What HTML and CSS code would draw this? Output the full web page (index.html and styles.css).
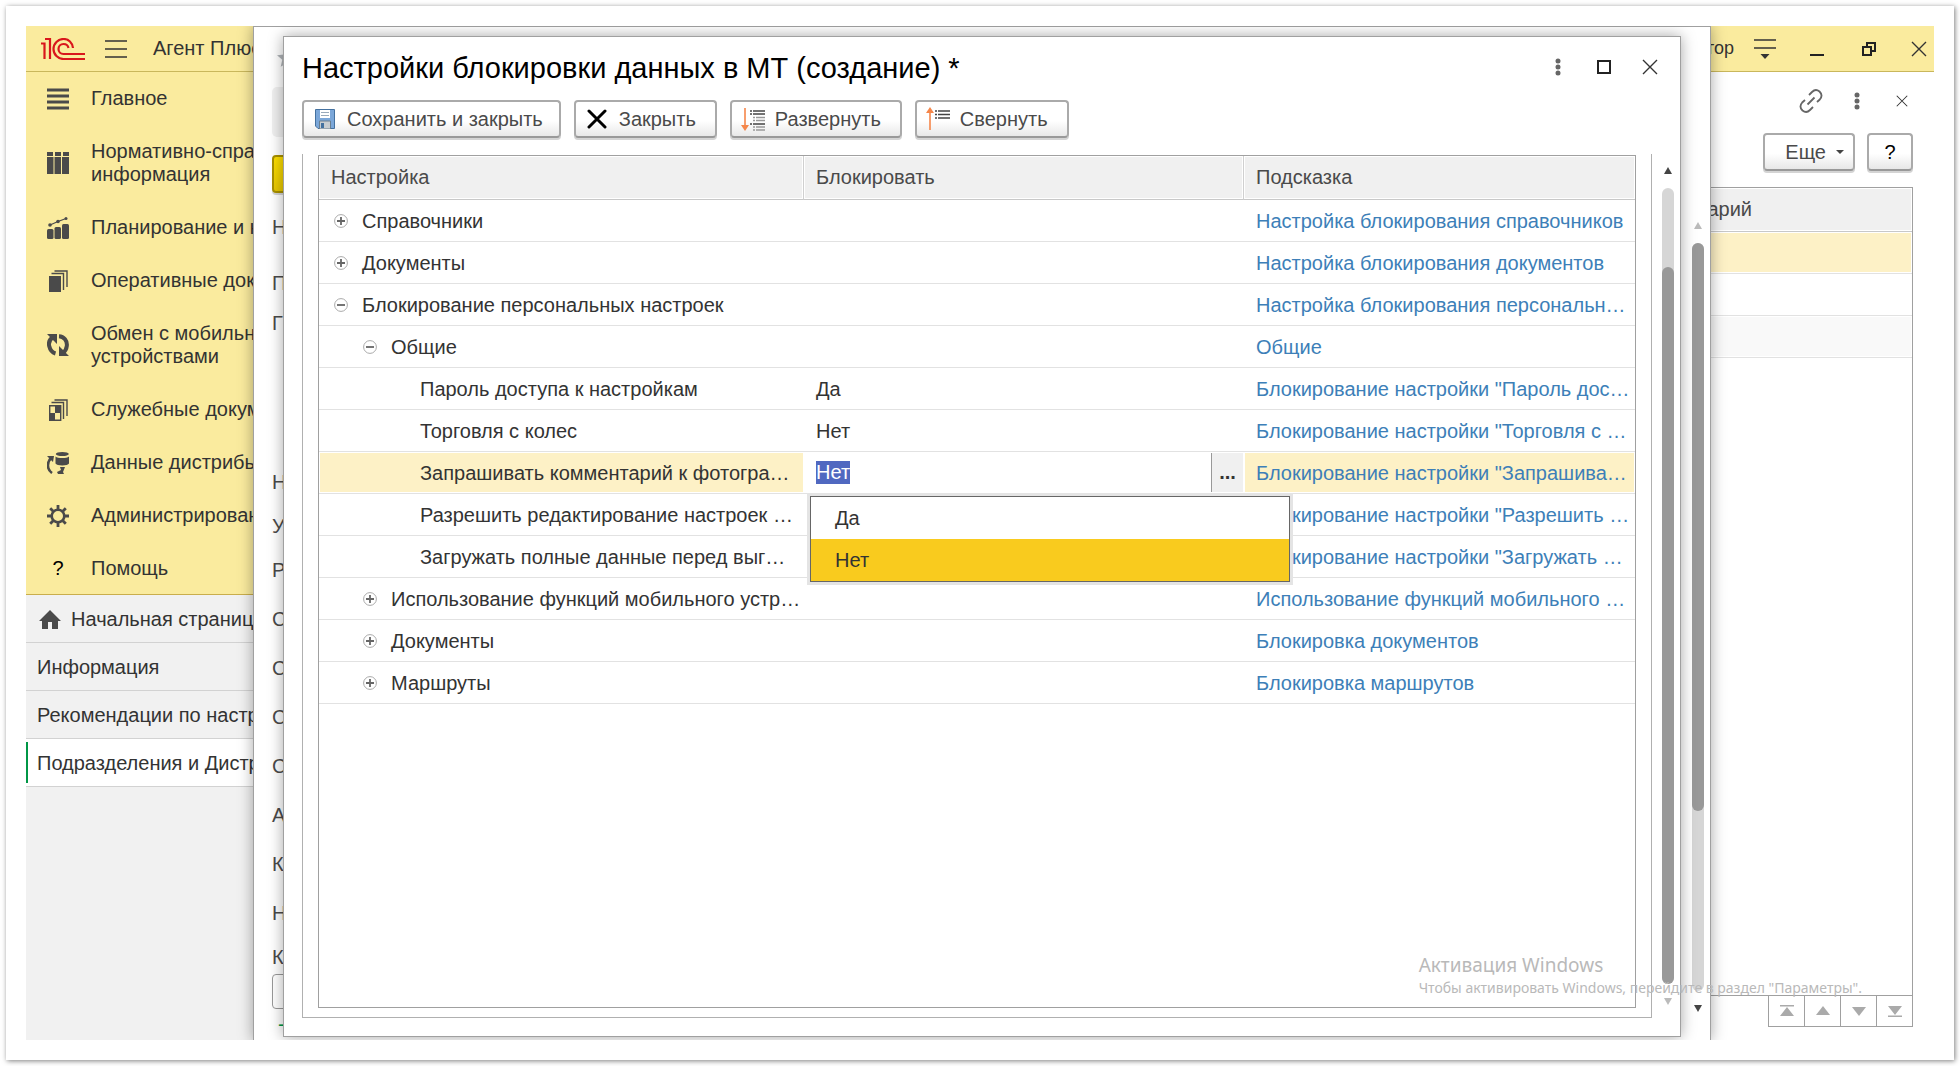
FILE: index.html
```html
<!DOCTYPE html>
<html lang="ru">
<head>
<meta charset="utf-8">
<title>Настройки блокировки данных в МТ (создание) *</title>
<link rel="stylesheet" href="styles.css">
</head>
<body>
<svg width="0" height="0" class="sprite" aria-hidden="true">
  <symbol id="plus" viewBox="0 0 14 14"><circle cx="7" cy="7" r="6.4" fill="#fff" stroke="#aaa" stroke-width="1"/><path d="M3 7h8M7 3v8" stroke="#666" stroke-width="1.8"/></symbol>
  <symbol id="minus" viewBox="0 0 14 14"><circle cx="7" cy="7" r="6.4" fill="#fff" stroke="#aaa" stroke-width="1"/><path d="M3 7h8" stroke="#666" stroke-width="1.8"/></symbol>
  <symbol id="dots" viewBox="0 0 6 18"><g fill="#666"><circle cx="3" cy="3" r="2.5"/><circle cx="3" cy="9" r="2.5"/><circle cx="3" cy="15" r="2.5"/></g></symbol>
  <symbol id="cross" viewBox="0 0 16 16"><path d="M1 1l14 14M15 1L1 15" stroke="#333" stroke-width="1.4"/></symbol>
</svg>
<div class="card">
<div class="app">
  <header class="topbar">
    <svg class="logo" width="44" height="22" viewBox="0 0 44 22" fill="none" stroke="#d9161c" stroke-width="2.2"><path d="M0 5.500h3.500V21M4 1h5V21" /><path d="M32 10C31.500 4.500 27.500 1 22.500 1C17 1 12.500 5.500 12.500 11S17 21 22.500 21H44"/><path d="M27.500 10C27 7.500 25 6 22.500 6C19.500 6 17.500 8.300 17.500 11S19.500 16 22.500 16H44"/></svg>
    <button class="icon-btn" aria-label="Меню"><svg width="22" height="18" viewBox="0 0 22 18"><path d="M0 1h22M0 9h22M0 17h22" stroke="#333" stroke-width="1.600"/></svg></button>
    <span class="app-name">Агент Плюс</span>
    <div class="top-right">
      <span class="user">Администратор</span>
      <button class="icon-btn" aria-label="Настройка панели"><svg width="22" height="20" viewBox="0 0 22 20"><path d="M0 1h22M0 9h22" stroke="#333" stroke-width="1.600"/><path d="M6.500 15h9L11 20z" fill="#333"/></svg></button>
      <button class="icon-btn minimize" aria-label="Свернуть окно"><svg width="14" height="14" viewBox="0 0 14 14"><path d="M0 13h14" stroke="#222" stroke-width="2"/></svg></button>
      <button class="icon-btn restore" aria-label="Восстановить окно"><svg width="14" height="14" viewBox="0 0 14 14"><path d="M1 5h8v8H1zM5 4V1h8v8h-3" fill="none" stroke="#222" stroke-width="2"/></svg></button>
      <button class="icon-btn" aria-label="Закрыть приложение"><svg width="16" height="16"><use href="#cross"/></svg></button>
    </div>
  </header>
  <div class="body">
    <aside class="sidebar">
      <nav class="sections">
        <a href="#"><svg width="22" height="22" viewBox="0 0 22 22"><path d="M0 2h22M0 8h22M0 14h22M0 20h22" stroke="#4a4a4a" stroke-width="3"/></svg><span>Главное</span></a>
        <a href="#"><svg width="22" height="22" viewBox="0 0 22 22" fill="#4a4a4a"><path d="M0 0h6v4H0zM8 0h6v4H8zM16 0h6v4h-6zM0 5h6.500v17H0zM7.500 5h6.500v17H7.500zM15 5h7v17h-7z"/></svg><span>Нормативно-спра<br>информация</span></a>
        <a href="#"><svg width="22" height="22" viewBox="0 0 22 22" fill="#4a4a4a"><rect y="12" width="6.500" height="10" rx="1.500"/><rect x="7.500" y="10" width="6.500" height="12" rx="1.500"/><rect x="15" y="7" width="7" height="15" rx="1.500"/><path d="M3 8L11 4.500L19 1.500" stroke="#4a4a4a" stroke-width="1.200" fill="none"/><circle cx="3" cy="8" r="1.800"/><circle cx="11" cy="4.500" r="1.800"/><circle cx="19" cy="1.500" r="1.500"/></svg><span>Планирование и к</span></a>
        <a href="#"><svg width="22" height="22" viewBox="0 0 22 22"><path d="M2 6h12v16H2z" fill="#4a4a4a"/><path d="M4.500 3.500h12V20M7.500 1H20V17" fill="none" stroke="#4a4a4a" stroke-width="1.400"/></svg><span>Оперативные док</span></a>
        <a href="#"><svg width="22" height="22" viewBox="0 0 22 22"><path d="M5.500 3.500C2 6 1.500 9 2.200 12C3 15.500 5 18.500 8.500 19.500M12 2.300C17 2.500 20.500 7 19.800 12C19.500 14.500 18.500 17 16 19" fill="none" stroke="#4a4a4a" stroke-width="4"/><path d="M0 0h10v10L7 7zM22 22H12V12l3 3z" fill="#4a4a4a"/></svg><span>Обмен с мобильн<br>устройствами</span></a>
        <a href="#"><svg width="22" height="22" viewBox="0 0 22 22"><path d="M2.700 6.700h11v14.600h-11z" fill="none" stroke="#4a4a4a" stroke-width="1.400"/><path d="M8 7h6v7H8zM2 14h6v7H2z" fill="#4a4a4a"/><path d="M4.500 3.500h12V20M7.500 1H20V17" fill="none" stroke="#4a4a4a" stroke-width="1.400"/></svg><span>Служебные докум</span></a>
        <a href="#"><svg width="22" height="22" viewBox="0 0 22 22"><path d="M8.500 4.500v7c1 2.500 12.500 2.500 13.500 0v-7c-2 2-11.500 2-13.500 0z" fill="#4a4a4a"/><ellipse cx="15.300" cy="2" rx="6.500" ry="2" fill="#4a4a4a"/><path d="M5 21C-.5 17 0 10 4 6" fill="none" stroke="#4a4a4a" stroke-width="2.600"/><path d="M0 4h7l-1 6zM13 15h5l-2 5 1 2h-6l-1-2 4-2z" fill="#4a4a4a"/></svg><span>Данные дистрибь</span></a>
        <a href="#"><svg width="22" height="22" viewBox="0 0 22 22"><circle cx="11" cy="11" r="6.300" fill="none" stroke="#4a4a4a" stroke-width="2.600"/><path d="M11 0v4M11 18v4M0 11h4M18 11h4M3.200 3.200l3 3M15.800 15.800l3 3M18.800 3.200l-3 3M6.200 15.800l-3 3" stroke="#4a4a4a" stroke-width="2.800"/></svg><span>Администрирован</span></a>
        <a href="#"><b class="qmark">?</b><span>Помощь</span></a>
      </nav>
      <nav class="tabs">
        <a href="#" class="home"><svg width="22" height="19" viewBox="0 0 22 19"><path d="M11 0L22 11H19V19H13V12H9V19H3V11H0z" fill="#4a4a4a"/></svg>Начальная страница</a>
        <a href="#">Информация</a>
        <a href="#">Рекомендации по настр</a>
        <a href="#" class="current">Подразделения и Дистр</a>
      </nav>
    </aside>
    <main class="page">
      <div class="page-tools">
        <button class="icon-btn" aria-label="Ссылка"><svg width="24" height="24" viewBox="0 0 24 24" fill="none" stroke="#666" stroke-width="1.800"><path d="M10 6l3-3c2-2 5-2.500 7.500-.5c2.500 2.500 2.500 5.500 .3 8L18 13"/><path d="M14 18l-3 3c-2 2-5 2.500-7.500 .5c-2.500-2.500-2.500-5.500-.3-8L6 11M8.500 15.500l7-7"/></svg></button>
        <button class="icon-btn" aria-label="Ещё действия"><svg width="6" height="18"><use href="#dots"/></svg></button>
        <button class="icon-btn" aria-label="Закрыть страницу"><svg width="12" height="12"><use href="#cross"/></svg></button>
      </div>
      <div class="page-buttons">
        <button class="btn more">Еще<svg width="8" height="4" viewBox="0 0 8 4"><path d="M0 0h8L4 4z" fill="#444"/></svg></button>
        <button class="btn help">?</button>
      </div>
      <div class="list">
        <div class="list-head">Комментарий</div>
        <div class="list-row active"></div>
        <div class="list-row"></div>
        <div class="list-row even"></div>
      </div>
      <div class="pager">
        <button aria-label="В начало"><svg width="16" height="12" viewBox="0 0 16 12" fill="#aaa"><path d="M1 0h14v1.500H1zM8 2l7 9H1z"/></svg></button>
        <button aria-label="Вверх"><svg width="16" height="12" viewBox="0 0 16 12" fill="#aaa"><path d="M8 1l7 9H1z"/></svg></button>
        <button aria-label="Вниз"><svg width="16" height="12" viewBox="0 0 16 12" fill="#aaa"><path d="M8 11l7-9H1z"/></svg></button>
        <button aria-label="В конец"><svg width="16" height="12" viewBox="0 0 16 12" fill="#aaa"><path d="M8 10l7-9H1zM1 10.500h14V12H1z"/></svg></button>
      </div>
    </main>
  </div>

  <section class="window back">
    <div class="back-left">
      <svg class="star" width="22" height="20" viewBox="0 0 22 20"><path d="M11 1l3 6.500 7 .7-5.300 4.500 1.600 7L11 16l-6.300 3.700 1.600-7L1 8.200l7-.7z" fill="#b0b4b8"/></svg>
      <span class="chip"></span>
      <button class="btn primary" aria-label="Записать и закрыть"></button>
      <span class="label first">Н</span>
      <span class="label gap-l">П</span>
      <span class="label gap-xs">Г</span>
      <span class="label gap-xl">Н</span>
      <span class="label gap-s">У</span>
      <span class="label gap-s">Р</span>
      <span class="label gap-m">С</span>
      <span class="label gap-m">С</span>
      <span class="label gap-m">С</span>
      <span class="label gap-m">С</span>
      <span class="label gap-m">А</span>
      <span class="label gap-m">К</span>
      <span class="label gap-m">Н</span>
      <label class="label gap-s" for="comment">К</label>
      <input id="comment" class="field">
      <span class="dash">-</span>
    </div>
    <div class="back-right">
      <svg class="back-close" width="16" height="16"><use href="#cross"/></svg>
      <i class="edge"></i><i class="edge"></i><i class="edge mid"></i><i class="edge low"></i>
    </div>
    <div class="scroll back-scroll">
      <svg width="8" height="7" viewBox="0 0 8 7"><path d="M4 0l4 7H0z" fill="#bbb"/></svg>
      <div class="track"><div class="thumb"></div></div>
      <svg width="8" height="7" viewBox="0 0 8 7"><path d="M4 7l4-7H0z" fill="#444"/></svg>
    </div>
  </section>

  <section class="window front">
    <div class="title-row">
      <h1>Настройки блокировки данных в МТ (создание) *</h1>
      <button class="icon-btn" aria-label="Ещё"><svg width="6" height="18"><use href="#dots"/></svg></button>
      <button class="icon-btn" aria-label="Развернуть окно"><svg width="14" height="14" viewBox="0 0 14 14"><path d="M1 1h12v12H1z" fill="none" stroke="#222" stroke-width="2"/></svg></button>
      <button class="icon-btn" aria-label="Закрыть окно"><svg width="16" height="16"><use href="#cross"/></svg></button>
    </div>
    <div class="toolbar">
      <button class="btn save"><svg width="20" height="20" viewBox="0 0 20 20"><path d="M.5 .5h19v19H3L.5 17z" fill="#7ba7d9" stroke="#44719f"/><path d="M5 1h10v8H5z" fill="#fff"/><path d="M6 3.500h8M6 6.500h8" stroke="#9ab"/><path d="M4.500 12h11v8h-11z" fill="#c8cdd0" stroke="#6a7f90"/><path d="M6 14h3v5H6z" fill="#44719f"/></svg>Сохранить и закрыть</button>
      <button class="btn"><svg width="20" height="20" viewBox="0 0 20 20"><path d="M2 2l16 16M18 2L2 18" stroke="#000" stroke-width="3" stroke-linecap="round"/></svg>Закрыть</button>
      <button class="btn tree"><svg width="24" height="24" viewBox="0 0 24 24"><path d="M4 1v19" stroke="#f5864a" stroke-width="1.600"/><path d="M0 18h8l-4 6z" fill="#f5864a"/><path d="M9 4h2M12 4h12M9 7h2M12 7h12M9 17h2M12 17h12" stroke="#444" stroke-width="1.500"/><path d="M12 10.500h2M15 10.500h9M12 13.500h2M15 13.500h9M12 20h2M15 20h9M12 23h2M15 23h9" stroke="#999" stroke-width="1.500"/></svg>Развернуть</button>
      <button class="btn tree"><svg width="24" height="24" viewBox="0 0 24 24"><path d="M4 4v19" stroke="#f5864a" stroke-width="1.600"/><path d="M0 6h8L4 0z" fill="#f5864a"/><path d="M9 4h2M12 4h12M9 7.500h2M12 7.500h12M9 11h2M12 11h12" stroke="#444" stroke-width="1.500"/></svg>Свернуть</button>
    </div>
    <div class="content">
      <div class="group">
        <div class="grid">
          <table>
            <colgroup><col class="c1"><col class="c2"><col></colgroup>
            <thead><tr><th>Настройка</th><th>Блокировать</th><th>Подсказка</th></tr></thead>
            <tbody>
              <tr><td class="l1"><svg width="14" height="14"><use href="#plus"/></svg>Справочники</td><td></td><td><a href="#">Настройка блокирования справочников</a></td></tr>
              <tr><td class="l1"><svg width="14" height="14"><use href="#plus"/></svg>Документы</td><td></td><td><a href="#">Настройка блокирования документов</a></td></tr>
              <tr><td class="l1"><svg width="14" height="14"><use href="#minus"/></svg>Блокирование персональных настроек</td><td></td><td><a href="#">Настройка блокирования персональн…</a></td></tr>
              <tr><td class="l2"><svg width="14" height="14"><use href="#minus"/></svg>Общие</td><td></td><td><a href="#">Общие</a></td></tr>
              <tr><td class="l3">Пароль доступа к настройкам</td><td>Да</td><td><a href="#">Блокирование настройки "Пароль дос…</a></td></tr>
              <tr><td class="l3">Торговля с колес</td><td>Нет</td><td><a href="#">Блокирование настройки "Торговля с …</a></td></tr>
              <tr class="selected"><td class="l3">Запрашивать комментарий к фотогра…</td>
                <td class="editing"><div class="editor"><input id="value" aria-label="Блокировать" value="Нет"><button aria-label="Выбрать">...</button>
                  <ul class="options" role="listbox"><li role="option">Да</li><li role="option" aria-selected="true">Нет</li></ul></div></td>
                <td><a href="#">Блокирование настройки "Запрашива…</a></td></tr>
              <tr><td class="l3">Разрешить редактирование настроек …</td><td></td><td><a href="#">Блокирование настройки "Разрешить …</a></td></tr>
              <tr><td class="l3">Загружать полные данные перед выг…</td><td></td><td><a href="#">Блокирование настройки "Загружать …</a></td></tr>
              <tr><td class="l2"><svg width="14" height="14"><use href="#plus"/></svg>Использование функций мобильного устр…</td><td></td><td><a href="#">Использование функций мобильного …</a></td></tr>
              <tr><td class="l2"><svg width="14" height="14"><use href="#plus"/></svg>Документы</td><td></td><td><a href="#">Блокировка документов</a></td></tr>
              <tr><td class="l2"><svg width="14" height="14"><use href="#plus"/></svg>Маршруты</td><td></td><td><a href="#">Блокировка маршрутов</a></td></tr>
            </tbody>
          </table>
        </div>
      </div>
      <div class="scroll">
        <svg width="8" height="7" viewBox="0 0 8 7"><path d="M4 0l4 7H0z" fill="#444"/></svg>
        <div class="track"><div class="thumb"></div></div>
        <svg width="8" height="7" viewBox="0 0 8 7"><path d="M4 7l4-7H0z" fill="#bbb"/></svg>
      </div>
    </div>
  </section>

  <div class="watermark"><p class="wm-title">Активация Windows</p><p>Чтобы активировать Windows, перейдите в раздел "Параметры".</p></div>
</div>
</div>
<script src="script.js"></script>
</body>
</html>
```
FILE: styles.css
```css
* { box-sizing: border-box; }
body { margin: 0; min-height: 100vh; display: flex; background: #fff; color: #333; font: 20px/23px "Liberation Sans", Arial, sans-serif; }
a { color: inherit; text-decoration: none; }
button, input { font: inherit; color: inherit; }
svg { flex: none; display: block; }
.sprite { position: absolute; }
.card { flex: 1; margin: 6px; padding: 20px; display: flex; background: #fff; box-shadow: 1px 1px 5px rgba(0,0,0,.5); }
.app { flex: 1; position: relative; display: flex; flex-direction: column; overflow: hidden; background: #fff; }

.topbar { height: 46px; background: #faeb9e; border-bottom: 1px solid #c9b75c; display: flex; align-items: center; padding: 0 7px 0 15px; gap: 20px; }
.app-name { padding-left: 6px; }
.icon-btn { border: 0; padding: 0; background: none; display: flex; }
.top-right { margin-left: auto; display: flex; align-items: center; }
.user { font-size: 18px; padding-right: 20px; }
.minimize { margin-left: 34px; }
.restore { margin: 0 35px 0 38px; }

.body { flex: 1; display: flex; }
.sidebar { width: 240px; flex: none; background: #f1f1f1; }
.sections { background: #faeb9e; border-bottom: 1px solid #c9ae4c; }
.sections a { display: flex; align-items: center; gap: 22px; padding: 15px 0 15px 21px; white-space: nowrap; }
.sections a:last-child { padding-bottom: 14px; }
.qmark { width: 22px; text-align: center; font-weight: 400; color: #000; }
.tabs a { display: flex; align-items: center; height: 48px; padding: 2px 0 0 11px; border-bottom: 1px solid #d2d2d2; white-space: nowrap; }
.tabs .home { padding-left: 13px; gap: 10px; }
.tabs .current { background: linear-gradient(#009646, #009646) 0 3px / 2px 41px no-repeat #fff; }

.page { flex: 1; display: flex; flex-direction: column; padding: 16px 21px 13px 0; }
.page-tools { height: 26px; display: flex; justify-content: flex-end; align-items: center; gap: 31px; padding-right: 5px; }
.page-tools .icon-btn:last-child { margin-left: 5px; }
.page-buttons { display: flex; justify-content: flex-end; gap: 12px; margin: 19px 0 16px; }
.btn { height: 38px; display: flex; align-items: center; padding: 0 19px 0 11px; gap: 12px; white-space: nowrap; color: #4a4a4a; background: linear-gradient(#fff 55%, #e8e8e8); border: 2px solid #aaa; border-bottom-color: #999; border-radius: 4px; box-shadow: 0 2px 0 #d4d4d4; }
.save { padding-right: 16px; }
.tree { padding-left: 9px; gap: 10px; }
.more { padding: 0 9px 0 20px; gap: 10px; }
.help { width: 46px; padding: 0; justify-content: center; color: #000; }
.list { flex: 1; border: 1px solid #a0a0a0; }
.list-head { height: 44px; padding: 10px 160px; text-align: right; color: #4a4a4a; background: #f0f0f0; border-bottom: 1px solid #c8c8c8; box-shadow: inset 0 0 0 1px #fff; }
.list-row { height: 42px; border-bottom: 1px solid #e2e2e2; box-shadow: inset 0 0 0 1px #fff; }
.list-row.active { background: #fdf1c6; }
.list-row.even { background: #f9f9f9; }
.pager { align-self: flex-end; display: flex; border-right: 1px solid #a0a0a0; border-bottom: 1px solid #a0a0a0; }
.pager button { width: 36px; height: 30px; padding: 0; border: 0; border-left: 1px solid #a0a0a0; background: #fff; display: flex; align-items: center; justify-content: center; }

.window { position: absolute; background: #fff; border: 1px solid #a0a0a0; box-shadow: 0 0 14px rgba(0,0,0,.35); }
.back { left: 227px; right: 223px; top: 0; bottom: -1px; display: flex; padding-left: 18px; }
.back-left { flex: 1; display: flex; flex-direction: column; align-items: flex-start; }
.star { margin: 20px 0 20px 4px; }
.chip { width: 60px; height: 50px; border-radius: 5px; background: #f0f0f0; }
.primary { width: 60px; margin-top: 18px; background: linear-gradient(#ffe000, #e8c800); border-color: #a89000; }
.label { line-height: 24px; color: #4a4a4a; }
.first { margin-top: 22px; }
.gap-xs { margin-top: 16px; }
.gap-s { margin-top: 20px; }
.gap-m { margin-top: 25px; }
.gap-l { margin-top: 32px; }
.gap-xl { margin-top: 135px; }
.field { width: 60px; height: 35px; margin-top: 5px; border: 1px solid #999; border-radius: 4px; }
.dash { padding: 4px 0 0 6px; color: #009646; }
.back-right { width: 24px; margin-right: 3px; }
.back-close { margin-top: 23px; }
.edge { display: block; width: 12px; height: 34px; border-right: 1px solid #999; margin-top: 18px; }
.back-close + .edge { margin-top: 90px; }
.edge.mid { margin-top: 149px; }
.edge.low { margin-top: 548px; }
.scroll { width: 12px; display: flex; flex-direction: column; align-items: center; gap: 14px; }
.track { flex: 1; width: 12px; border-radius: 6px; background: #d6d6d6; }
.thumb { width: 12px; border-radius: 6px; background: #999; }
.back-scroll { padding: 195px 0 28px; margin-right: 6px; }
.back-scroll .thumb { height: 76%; }

.front { left: 257px; right: 253px; top: 10px; bottom: 3px; display: flex; flex-direction: column; padding: 10px 6px 18px 18px; }
.title-row { height: 40px; display: flex; align-items: center; padding-right: 16px; }
h1 { flex: 1; margin: 0; padding-top: 2px; font-size: 29px; line-height: 34px; font-weight: 400; color: #000; }
.title-row .icon-btn { margin-left: 38px; }
.title-row .icon-btn + .icon-btn { margin-left: 36px; }
.title-row .icon-btn:last-child { margin-left: 31px; }
.toolbar { display: flex; gap: 13px; margin-top: 13px; }
.content { flex: 1; display: flex; gap: 10px; margin-top: 16px; }
.group { flex: 1; display: flex; padding: 1px 15px 9px; border: 1px solid #b0b0b0; border-top: 0; }
.grid { flex: 1; border: 1px solid #a0a0a0; }
table { width: 100%; table-layout: fixed; border-collapse: separate; border-spacing: 0; }
.c1 { width: 485px; }
.c2 { width: 440px; }
th { height: 44px; padding: 0 12px; text-align: left; font-weight: 400; color: #4a4a4a; background: #f0f0f0; border-bottom: 1px solid #c8c8c8; border-right: 1px solid #d0d0d0; box-shadow: inset 0 0 0 1px #fff; }
th:last-child { border-right: 0; }
td { height: 42px; padding: 2px 12px 0; white-space: nowrap; border-bottom: 1px solid #e2e2e2; }
td a { color: #3d7fb8; }
td svg { display: inline-block; vertical-align: 0; margin-right: 14px; }
.l1 { padding-left: 15px; }
.l2 { padding-left: 44px; }
.l3 { padding-left: 101px; }
.selected td { background: #fdf1c6; box-shadow: inset 0 0 0 1px #fff; }
.selected .editing { padding: 0; background: #fff; }
.editor { position: relative; display: flex; height: 39px; }
.editor input { flex: 1; min-width: 0; height: 39px; border: 0; padding: 0 12px; outline: 0; background: none; }
.editor input::selection { background: #5068c0; color: #fff; }
.editor button { width: 32px; margin-right: 1px; padding: 0; border: 0; border-left: 1px solid #999; background: #f0f0f0; font-weight: 700; }
.options { position: absolute; z-index: 2; left: 6px; top: 43px; width: 480px; margin: 0; padding: 0; list-style: none; background: #fff; border: 1px solid #666; box-shadow: 0 0 0 3px #e4e4e4; }
.options li { height: 42px; padding: 10px 24px; }
.options [aria-selected] { background: #f9cb1e; }
.content > .scroll { padding: 13px 0; }
.content .track { padding-top: 79px; display: flex; }

.watermark { position: absolute; right: 72px; bottom: 42px; color: #b9b9b9; font: 14px/20px "Noto Sans", "Open Sans", sans-serif; white-space: nowrap; }
.watermark p { margin: 0; }
.watermark .wm-title { font-size: 19px; line-height: 26px; }
```
FILE: script.js
```js
const value = document.getElementById("value");
value.focus();
value.select();
```
